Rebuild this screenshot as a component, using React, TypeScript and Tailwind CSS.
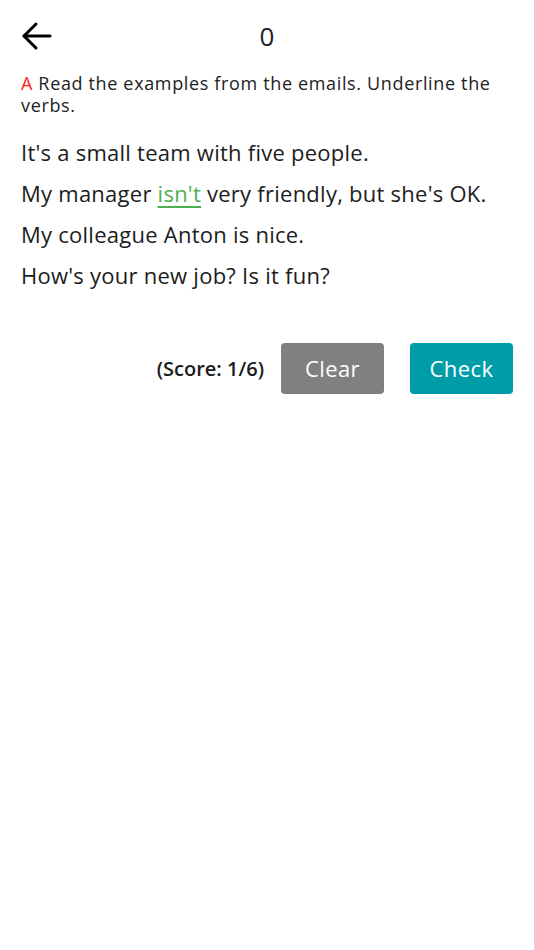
import React from "react";

const sentences = [
  ["It's a small team with five people."],
  ["My manager ", "isn't", " very friendly, but she's OK."],
  ["My colleague Anton is nice."],
  ["How's your new job? Is it fun?"],
];

const App: React.FC = () => {
  return (
    <div className="min-h-[950px] bg-white text-[#1c1c1c] font-['Open_Sans',sans-serif]">
      <div className="relative flex items-center h-[72px] px-[20px]">
        <svg width="34" height="34" viewBox="0 0 34 34" fill="none" stroke="#000" strokeWidth="3" strokeLinecap="round" strokeLinejoin="round">
          <path d="M4 17H30" />
          <path d="M16 5L4 17L16 29" />
        </svg>
        <div className="absolute left-0 right-0 text-center text-[26px] leading-none pointer-events-none">0</div>
      </div>
      <p className="px-[21px] text-[18px] leading-[22px] tracking-[0.65px] text-[#222]">
        <span className="text-[#ff2020]">A</span> Read the examples from the emails. Underline the verbs.
      </p>
      <div className="px-[21px] mt-[22px] flex flex-col gap-[12px]">
        {sentences.map((s, i) => (
          <p key={i} className="text-[22px] leading-[29px] tracking-[0.25px]">
            {s.length === 1 ? (
              s[0]
            ) : (
              <>
                {s[0]}
                <span className="text-[#4caf50] underline underline-offset-[4px]">{s[1]}</span>
                {s[2]}
              </>
            )}
          </p>
        ))}
      </div>
      <div className="flex items-center justify-end gap-[17px] px-[21px] mt-[53px]">
        <span className="text-[20px] font-semibold">(Score: 1/6)</span>
        <button className="w-[103px] h-[51px] rounded-[4px] bg-[#808080] text-white text-[22px] tracking-[0.4px]">Clear</button>
        <button className="w-[103px] h-[51px] rounded-[4px] bg-[#009ca8] text-white text-[22px] tracking-[0.4px] ml-[9px]">Check</button>
      </div>
    </div>
  );
};

export default App;
